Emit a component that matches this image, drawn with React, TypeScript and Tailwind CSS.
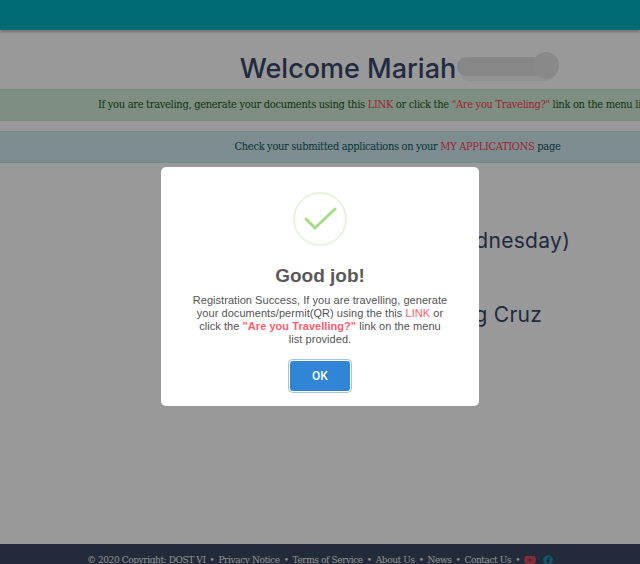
import { FaFacebook, FaYoutube } from 'react-icons/fa';

const serif = 'font-["DejaVu_Serif_Condensed","DejaVu_Serif",serif]';

export default function App() {
  return (
    <div className="relative flex h-[564px] w-[640px] flex-col overflow-hidden bg-white">
      <header className="h-[30px] shrink-0 bg-[#00b1c3] shadow-[0_2px_2px_rgba(0,0,0,0.25)]" />

      <main className="w-[795px] flex-1 overflow-hidden text-center">
        <h1 className='mt-[22px] h-[37px] font-["Inter",sans-serif] text-[27px] leading-[34px] font-medium text-[#39476a]'>
          <span className="relative ml-[4px] inline-block pr-[103px]">
            Welcome Mariah
            {/* scribbled out surname */}
            <span className="absolute top-[15px] right-[6px] h-[14px] w-[92px] rounded-full bg-[#f4f4f4]" />
            <span className="absolute top-[5px] right-[8px] h-[19px] w-[94px] rounded-full bg-[#e2e2e2]" />
            <span className="absolute top-[0px] right-0 h-[27px] w-[26px] rounded-[13px] bg-[#e4e4e4]" />
          </span>
        </h1>
        <div className={`flex h-[32px] items-center justify-center border-y border-[#c3e6cb] bg-[#d4edda] whitespace-nowrap ${serif} text-[11px] tracking-[-0.3px] text-[#155724]`}>
          <span>
            If you are traveling, generate your documents using this <a className="text-[#ff3b4e]">LINK</a> or click the{' '}
            <a className="text-[#ff3b4e]">"Are you Traveling?"</a> link on the menu list provided.
          </span>
        </div>
        <div className={`mt-[10px] flex h-[32px] items-center justify-center border-y border-[#bee5eb] bg-[#d1ecf1] whitespace-nowrap ${serif} text-[11px] tracking-[-0.32px] text-[#0c5460]`}>
          <span>
            Check your submitted applications on your <a className="text-[#ff3b4e]">MY APPLICATIONS</a> page
          </span>
        </div>
        <p className='mt-[63px] font-["Inter",sans-serif] text-[21px] leading-[30px] tracking-[0.3px] text-[#39476a]'>Date: June 10, 2020 (Wednesday)</p>
        <p className='mt-[44px] font-["Inter",sans-serif] text-[21px] leading-[30px] tracking-[0.3px] text-[#39476a]'>Officer in charge: Long Cruz</p>
      </main>

      <footer className={`flex h-[20px] shrink-0 items-start justify-center gap-[4px] bg-[#394861] pt-[9px] whitespace-nowrap ${serif} text-[10px] leading-[13px] tracking-[-0.4px] text-[#f0f0f0]`}>
        <span>© 2020 Copyright: DOST VI</span>
        <span>•</span>
        <span>Privacy Notice</span>
        <span>•</span>
        <span>Terms of Service</span>
        <span>•</span>
        <span>About Us</span>
        <span>•</span>
        <span>News</span>
        <span>•</span>
        <span>Contact Us</span>
        <span>•</span>
        <FaYoutube className="mt-[1px] text-[12px] text-[#e04a60]" />
        <FaFacebook className="mt-[2px] ml-[3px] text-[10px] text-[#1d8fb0]" />
      </footer>

      <div className="absolute inset-0 flex justify-center bg-black/40 pt-[167px]">
        <div className='flex h-[239px] w-[318px] flex-col items-center rounded-[5px] bg-white font-["Liberation_Sans",Arial,sans-serif]'>
          <svg className="mt-[25px] size-[54px]" viewBox="0 0 54 54" fill="none">
            <circle cx="27" cy="27" r="26" stroke="#a5dc86" strokeOpacity="0.3" strokeWidth="2" />
            <path d="M13 27 L22 36 L42 17" stroke="#a5dc86" strokeWidth="3" strokeLinecap="round" />
          </svg>
          <h2 className="mt-[19px] text-[19px] leading-[22px] font-bold text-[#595959]">Good job!</h2>
          <p className="mt-[7px] w-[256px] text-center text-[11px] leading-[13px] tracking-[0.05px] text-[#545454]">
            Registration Success, If you are travelling, generate your documents/permit(QR) using the this{' '}
            <a className="text-[#ff5c6c]">LINK</a> or click the <b className="text-[#ff5c6c]">"Are you Travelling?"</b> link on the menu list provided.
          </p>
          <button className='mt-[15px] h-[30px] w-[60px] rounded-[3px] bg-[#3085d6] font-["Roboto",sans-serif] text-[12px] font-medium text-white shadow-[0_0_0_1px_#fff,0_0_0_2px_rgba(50,100,150,0.4)]'>
            OK
          </button>
        </div>
      </div>
    </div>
  );
}
